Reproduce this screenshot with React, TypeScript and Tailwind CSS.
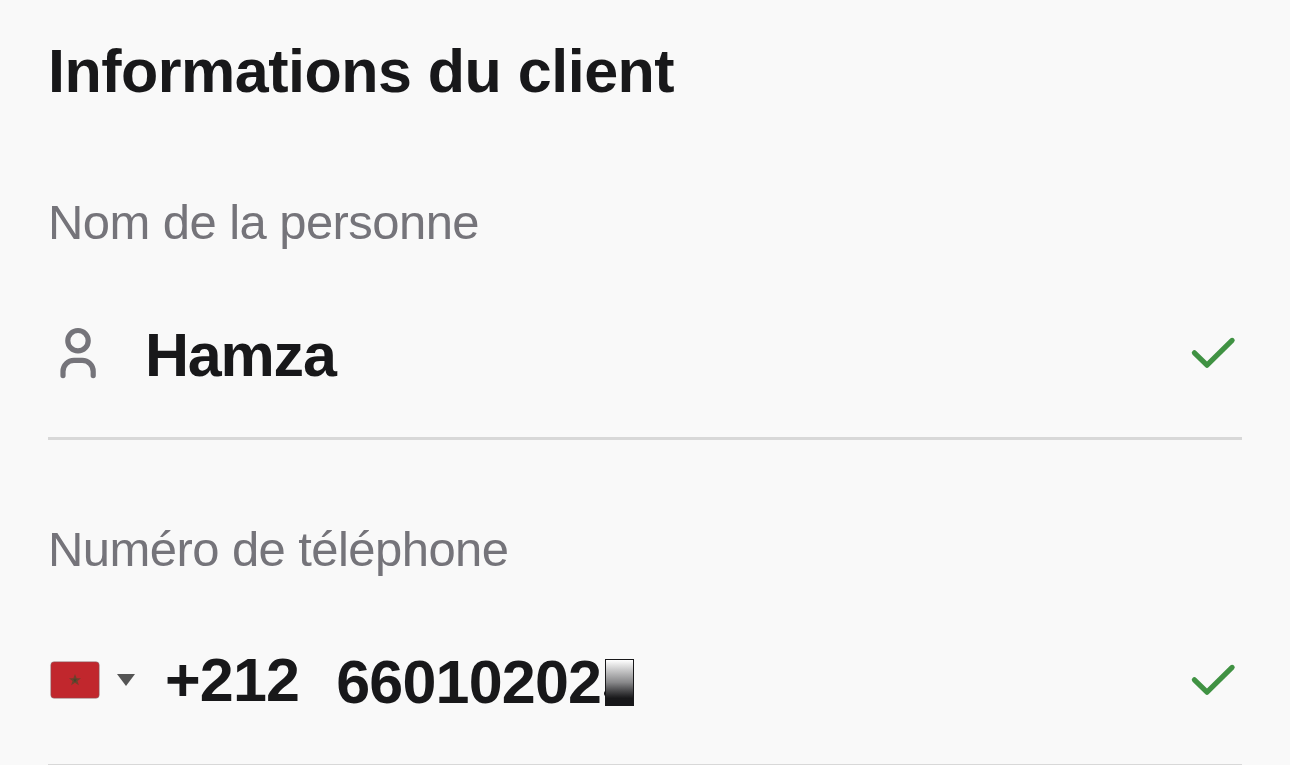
import type { ReactNode } from "react";

function UserIcon() {
  return (
    <svg width="60" height="60" viewBox="0 0 60 60" fill="none" stroke="#75747a" strokeWidth="5.2" strokeLinecap="round">
      <circle cx="30" cy="16.7" r="10.2" />
      <path d="M15 51.6V47.4a11 11 0 0 1 11-11h8.2a11 11 0 0 1 11 11V51.6" />
    </svg>
  );
}

function CheckIcon() {
  return (
    <svg width="60" height="60" viewBox="0 0 60 60" fill="none" stroke="#409243" strokeWidth="5.2" strokeLinecap="round" strokeLinejoin="round">
      <path d="M12.4 28.8L25 41.2L50.1 16.4" />
    </svg>
  );
}

function MoroccoFlag() {
  return (
    <svg className="mb-0.5" width="54" height="42" viewBox="0 0 54 42">
      <rect x="2" y="2" width="50" height="38" rx="4.5" fill="#d9dadb" />
      <rect x="3" y="3" width="48" height="36" rx="3" fill="#c1272d" stroke="#9b4549" strokeWidth="0.6" />
      <path d="M27 17l1.1 2.8 3 .1-2.4 1.9.9 2.9-2.6-1.7-2.6 1.7.9-2.9-2.4-1.9 3-.1z" fill="#3d4a2e" stroke="#70402c" strokeWidth="1.4" />
    </svg>
  );
}

function Field({ label, children }: { label: string; children: ReactNode }) {
  return (
    <section className="h-[327px] border-b-[3px] border-[#d8d8d8]">
      <div className="flex h-[136px] items-end text-[49px] leading-[54px] tracking-[-0.57px] text-[#75747a]">{label}</div>
      <div className="mt-[60px] flex h-[90px] items-center">
        {children}
        <div className="ml-auto">
          <CheckIcon />
        </div>
      </div>
    </section>
  );
}

export default function App() {
  return (
    <main className="h-[765px] overflow-hidden bg-[#f9f9f9] px-12 font-['Liberation_Sans',Arial,sans-serif] text-[#18181a]">
      <h1 className="h-[113px] whitespace-nowrap pt-[35px] text-[61px] leading-[72px] font-bold tracking-[-0.5px]">
        Informations du client
      </h1>
      <Field label="Nom de la personne">
        <UserIcon />
        <span className="mt-0.5 ml-[37px] text-[61px] leading-[72px] font-bold tracking-[-1.2px]">Hamza</span>
      </Field>
      <Field label="Numéro de téléphone">
        <MoroccoFlag />
        <svg className="mb-0.5 ml-[15px]" width="18" height="12" viewBox="0 0 18 12">
          <path d="M0 0H18L9 12Z" fill="#555" />
        </svg>
        <span className="mb-0.5 ml-[30px] text-[61px] leading-[72px] font-bold tracking-[-0.8px]">+212</span>
        <span className="mt-0.5 ml-[37px] text-[61px] leading-[72px] font-bold tracking-[-0.8px]">66010202</span>
        {/* masked last digit */}
        <span className="relative mt-0.5 ml-[4px] h-[47px] w-[29px] border border-[#18181a] bg-linear-to-b from-white via-[#88888a] to-[#18181a] to-85%">
          <span className="absolute top-[31px] -left-[2px] h-[5px] w-[2px] rounded-l-full bg-[#18181a]" />
        </span>
      </Field>
    </main>
  );
}
